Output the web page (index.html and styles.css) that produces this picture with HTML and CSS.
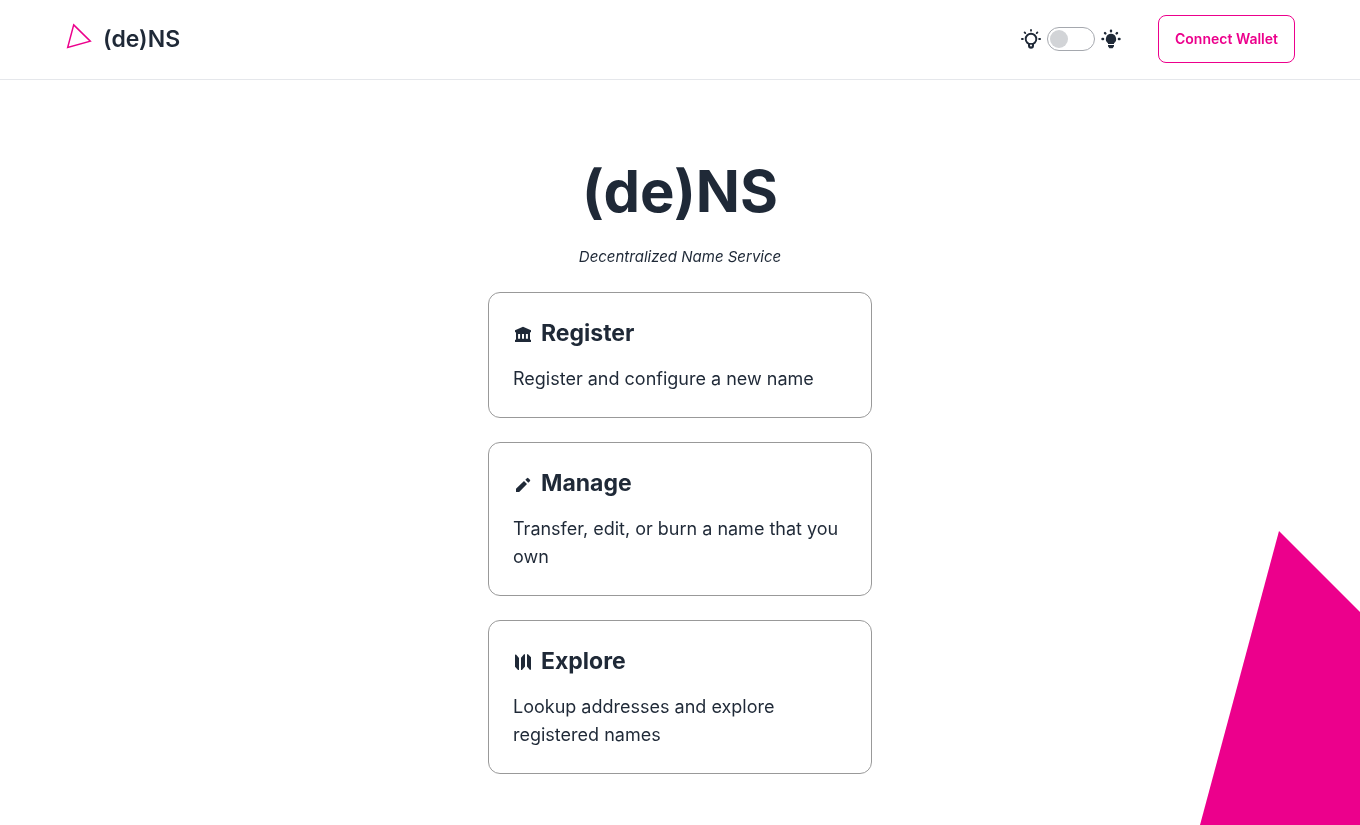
FILE: index.html
```html
<!DOCTYPE html>
<html lang="en">
<head>
<meta charset="utf-8">
<meta name="viewport" content="width=device-width, initial-scale=1">
<title>(de)NS</title>
<link rel="stylesheet" href="styles.css">
</head>
<body>
<header class="header">
  <a class="brand" href="#">
    <svg class="brand-mark" viewBox="0 0 28 28" aria-hidden="true"><path d="M8.700 2.900 25.300 19.200 2.700 25.400Z" fill="none" stroke="currentColor" stroke-width="1.500"/></svg>
    <span>(de)NS</span>
  </a>
  <div class="actions">
    <label class="theme">
      <svg class="bulb" viewBox="0 0 20 20" aria-hidden="true"><circle cx="10" cy="10" r="5.300" fill="none" stroke="currentColor" stroke-width="1.900"/><path d="M7 14.200h6v2.600a3 3 0 0 1-6 0Z" fill="currentColor"/><circle cx="10" cy="16.600" r="1" fill="#fff"/><path d="M10 .9v.8M3.600 3.400l.7.700M16.400 3.400l-.7.700M.9 10h1M18.100 10h1" fill="none" stroke="currentColor" stroke-width="1.800" stroke-linecap="round"/></svg>
      <input class="toggle" type="checkbox" aria-label="Dark theme">
      <svg class="bulb" viewBox="0 0 20 20" aria-hidden="true"><path d="M10 4.800a5.200 5.200 0 0 1 3 9.400V15H7v-.8a5.200 5.200 0 0 1 3-9.400ZM7 16h6v1.200L11.600 19.300H8.400L7 17.200Z" fill="currentColor"/><path d="M10 1.600v.6M4 4.100l.4.400M16 4.100l-.4.400M1.500 10h.6M17.900 10h.6" fill="none" stroke="currentColor" stroke-width="2.400" stroke-linecap="round"/></svg>
    </label>
    <button class="connect" type="button">Connect Wallet</button>
  </div>
</header>
<main class="main">
  <h1 class="title">(de)NS</h1>
  <p class="tagline">Decentralized Name Service</p>
  <nav class="cards">
    <a class="card" href="#">
      <h2 class="card-title"><svg class="icon" viewBox="0 0 20 20" aria-hidden="true"><path d="M10 3.800 18 7.300V9.300h-1V16.800h1V19H2V16.800h1V9.300H2V7.300ZM5.100 11v4.800h2V11Zm3.900 0v4.800h2V11Zm3.900 0v4.800h2V11Z" fill="currentColor" fill-rule="evenodd"/></svg>Register</h2>
      <p class="card-text">Register and configure a new name</p>
    </a>
    <a class="card" href="#">
      <h2 class="card-title"><svg class="icon" viewBox="0 0 20 20" aria-hidden="true"><path d="M3 19v-3.200l8-7.800 3 3L6.200 19ZM12.300 6.800l1.600-1.600q.6-.5 1.200-.3l2.100 2.100q.2.600-.3 1.200l-1.600 1.600Z" fill="currentColor"/></svg>Manage</h2>
      <p class="card-text">Transfer, edit, or burn a name that you own</p>
    </a>
    <a class="card" href="#">
      <h2 class="card-title"><svg class="icon" viewBox="0 0 20 20" aria-hidden="true"><path d="M2 3.800 3 3.400 6 7V19L5 19 2 15.800ZM8 6.800 11 3.200H12V15.400L9 19H8ZM14 3.200H15L18 6.200V18.600L17 19 14 15.600Z" fill="currentColor"/></svg>Explore</h2>
      <p class="card-text">Lookup addresses and explore registered names</p>
    </a>
  </nav>
</main>
<svg class="backdrop" viewBox="0 0 160 294" aria-hidden="true"><path d="M79 0 160 81V294H0Z" fill="currentColor"/></svg>
</body>
</html>
```
FILE: styles.css
```css
* { box-sizing: border-box; }
body {
  margin: 0;
  min-height: 100vh;
  background: #fff;
  color: #1f2937;
  font-family: Inter, "Liberation Sans", sans-serif;
  font-size: 16px;
  line-height: 24px;
}
h1, h2, p { margin: 0; }
a { color: inherit; text-decoration: none; }
svg { display: block; flex: none; }

.header {
  display: flex;
  align-items: center;
  justify-content: space-between;
  height: 80px;
  padding: 0 65px 1px;
  border-bottom: 1px solid #e5e7eb;
}
.brand {
  display: flex;
  align-items: center;
  gap: 10px;
  font-size: 23px;
  font-weight: 600;
  line-height: 34px;
}
.brand-mark { width: 28px; height: 28px; margin-bottom: 6px; color: #ec008c; }
.actions { display: flex; align-items: center; gap: 37px; }
.theme { display: flex; align-items: center; gap: 6px; }
.bulb { width: 20px; height: 20px; }
.toggle {
  appearance: none;
  display: flex;
  align-items: center;
  width: 48px;
  height: 24px;
  margin: 0;
  padding: 2px;
  border: 1px solid #a5a8ae;
  border-radius: 12px;
  background: #fff;
  cursor: pointer;
}
.toggle::before {
  content: "";
  width: 18px;
  height: 18px;
  border-radius: 50%;
  background: #d2d4d7;
}
.toggle:checked { justify-content: flex-end; }
.connect {
  height: 48px;
  padding: 0 16px;
  border: 1px solid #ec008c;
  border-radius: 8px;
  background: transparent;
  color: #ec008c;
  font: 600 14px/20px Inter, "Liberation Sans", sans-serif;
  cursor: pointer;
}

.main {
  display: flex;
  flex-direction: column;
  align-items: center;
  padding: 80px 16px 48px;
}
.title { font-size: 58px; font-weight: 700; line-height: 62px; margin-bottom: 23px; }
.tagline { font-size: 15px; font-style: italic; margin-bottom: 23px; }
.cards { display: grid; gap: 24px; width: 100%; max-width: 384px; }
.card { padding: 24px; border: 1px solid #999; border-radius: 12px; }
.card-title {
  display: flex;
  align-items: center;
  gap: 8px;
  font-size: 23px;
  font-weight: 700;
  line-height: 32px;
}
.icon { width: 20px; height: 20px; }
.card-text { margin-top: 16px; font-size: 18px; line-height: 28px; }

.backdrop {
  position: fixed;
  right: 0;
  bottom: 0;
  z-index: -1;
  width: 160px;
  height: 294px;
  color: #ec008c;
}
```
